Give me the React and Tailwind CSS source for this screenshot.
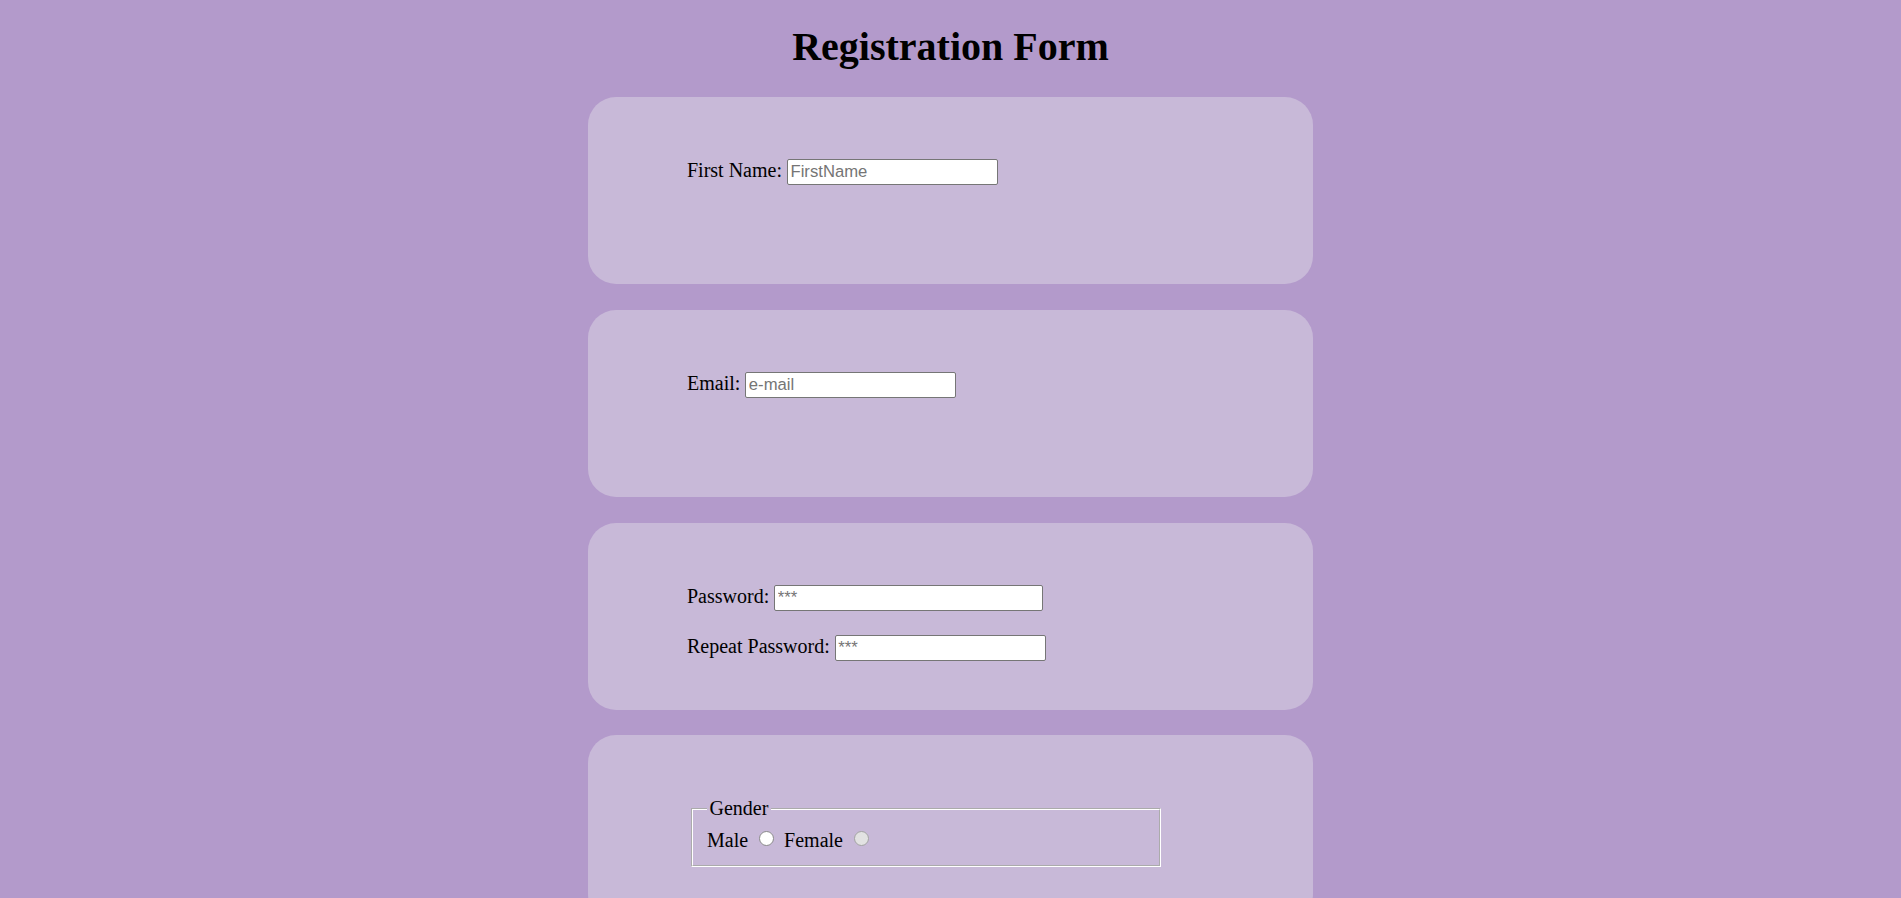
import React from "react";

function Card({ children }) {
  return (
    <div className="mx-auto h-[187px] w-[725px] shrink-0 rounded-[28px] bg-[#c8b9d8] pl-[99px] pt-[62px]">
      {children}
    </div>
  );
}

function TextInput({ type = "text", placeholder, width = "w-[211px]" }) {
  return (
    <input
      type={type}
      placeholder={placeholder}
      className={`${width} h-[26px] rounded-[2px] border border-[#767676] bg-white px-[2.5px] align-baseline font-['Liberation_Sans',Arial,sans-serif] text-[16.67px] leading-[normal] text-black outline-none placeholder:text-[#757575]`}
    />
  );
}

function Radio({ name, filled }) {
  return (
    <input
      type="radio"
      name={name}
      className={`inline-block h-[15px] w-[15px] appearance-none rounded-full border align-[1.7px] ${
        filled ? "border-[#a3a3a3] bg-[#e2e2e2]" : "border-[#8a8a8a] bg-white"
      }`}
    />
  );
}

export default function App() {
  return (
    <div className="h-screen overflow-hidden bg-[#b39acb] font-['Liberation_Serif','Times_New_Roman',serif] text-[20px] leading-[normal] text-black">
      <h1 className="mb-[27.5px] mt-[23.5px] text-center text-[40px] font-bold leading-[46px]">
        Registration Form
      </h1>

      <div className="flex flex-col gap-[25.8px]">
        <Card>
          <div>
            <label>First Name:</label> <TextInput placeholder="FirstName" />
          </div>
        </Card>

        <Card>
          <div>
            <label>Email:</label> <TextInput type="email" placeholder="e-mail" />
          </div>
        </Card>

        <Card>
          <div className="flex flex-col gap-[24px]">
            <div>
              <label>Password:</label>{" "}
              <TextInput type="password" placeholder="***" width="w-[269px]" />
            </div>
            <div>
              <label>Repeat Password:</label> <TextInput type="password" placeholder="***" />
            </div>
          </div>
        </Card>

        <Card>
          <fieldset className="ml-[4px] w-[470px] border-2 border-white px-[14px] pb-[12.5px] pt-[8.8px] [border-style:groove]">
            <legend className="px-[2.5px]">Gender</legend>
            <div>
              <span>Male</span>
              <span className="ml-[11px]">
                <Radio name="gender" />
              </span>
              <span className="ml-[10px]">Female</span>
              <span className="ml-[11px]">
                <Radio name="gender" filled />
              </span>
            </div>
          </fieldset>
        </Card>
      </div>
    </div>
  );
}
